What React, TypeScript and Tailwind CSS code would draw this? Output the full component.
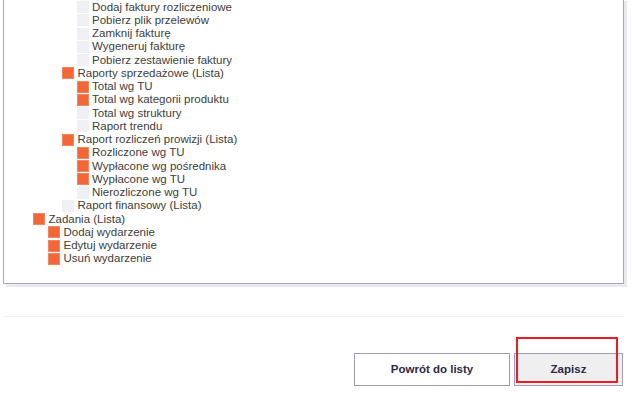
import React from "react";

type Row = { label: string; level: number; checked: boolean };

const rows: Row[] = [
  { label: "Dodaj faktury rozliczeniowe", level: 4, checked: false },
  { label: "Pobierz plik przelewów", level: 4, checked: false },
  { label: "Zamknij fakturę", level: 4, checked: false },
  { label: "Wygeneruj fakturę", level: 4, checked: false },
  { label: "Pobierz zestawienie faktury", level: 4, checked: false },
  { label: "Raporty sprzedażowe (Lista)", level: 3, checked: true },
  { label: "Total wg TU", level: 4, checked: true },
  { label: "Total wg kategorii produktu", level: 4, checked: true },
  { label: "Total wg struktury", level: 4, checked: false },
  { label: "Raport trendu", level: 4, checked: false },
  { label: "Raport rozliczeń prowizji (Lista)", level: 3, checked: true },
  { label: "Rozliczone wg TU", level: 4, checked: true },
  { label: "Wypłacone wg pośrednika", level: 4, checked: true },
  { label: "Wypłacone wg TU", level: 4, checked: true },
  { label: "Nierozliczone wg TU", level: 4, checked: false },
  { label: "Raport finansowy (Lista)", level: 3, checked: false },
  { label: "Zadania (Lista)", level: 1, checked: true },
  { label: "Dodaj wydarzenie", level: 2, checked: true },
  { label: "Edytuj wydarzenie", level: 2, checked: true },
  { label: "Usuń wydarzenie", level: 2, checked: true },
];

const indent: Record<number, string> = {
  1: "pl-[29px]",
  2: "pl-[44px]",
  3: "pl-[58px]",
  4: "pl-[72.5px]",
};

export default function App() {
  return (
    <div
      className="relative w-[634px] h-[397px] overflow-hidden bg-white"
      style={{ fontFamily: '"Liberation Sans", Arial, sans-serif' }}
    >
      <div className="ml-[3px] mt-[-2px] w-[621px] border border-[#a9a5c2] bg-white pt-[1.4px] pb-[18px] shadow-[3px_3px_0_#e9e9ee]">
        {rows.map((r, i) => (
          <div
            key={i}
            className={`flex h-[13.25px] items-center ${indent[r.level]}`}
          >
            <span
              className={
                r.checked
                  ? "h-[12px] w-[12px] shrink-0 bg-[#f26638] border border-[#f4855f]"
                  : "h-[12px] w-[12px] shrink-0 bg-[#eff0f5]"
              }
            />
            <span className="ml-[3.5px] whitespace-nowrap text-[11.5px] leading-[13px] text-[#404040]">
              {r.label}
            </span>
          </div>
        ))}
      </div>
      <div className="ml-[3px] mt-[32px] h-px w-[621px] bg-[#efeff3]" />
      <div className="mt-[36px] flex justify-end gap-[4px] pr-[11px]">
        <button className="h-[33px] w-[156px] border border-[#a09cba] bg-white text-[11.5px] font-bold text-[#2c2a4a]">
          Powrót do listy
        </button>
        <div className="relative">
          <button className="h-[33px] w-[109px] border border-[#a09cba] bg-[#efefef] text-[11.5px] font-bold text-[#2c2a4a]">
            Zapisz
          </button>
          <div className="pointer-events-none absolute left-[2px] top-[-16px] h-[46px] w-[102px] border-2 border-[#ec1c24]" />
        </div>
      </div>
    </div>
  );
}
